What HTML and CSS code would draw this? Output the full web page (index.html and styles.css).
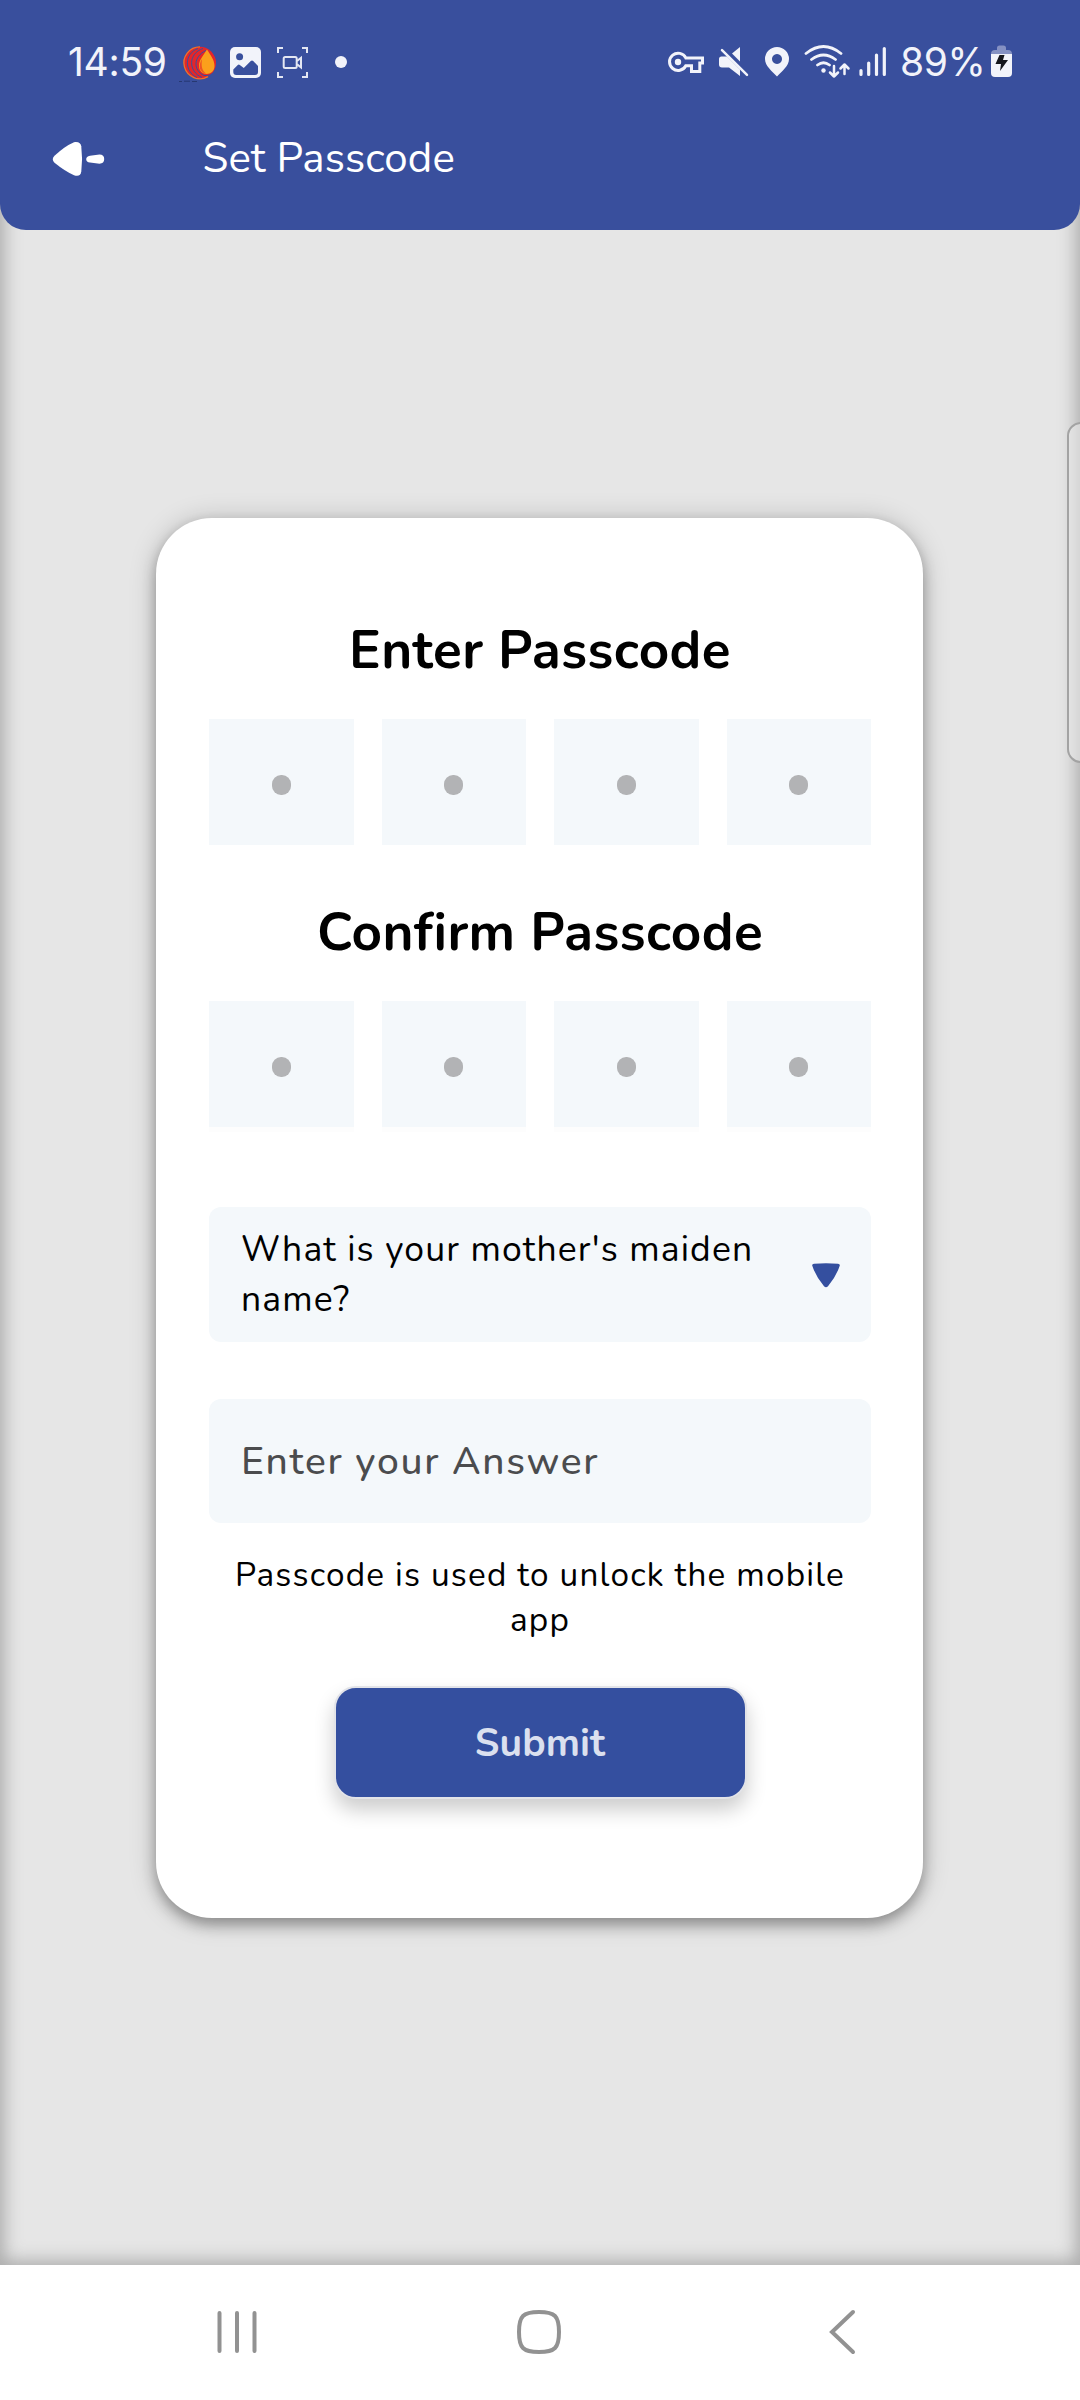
FILE: index.html
```html
<!DOCTYPE html>
<html lang="en">
<head>
<meta charset="utf-8">
<title>Set Passcode</title>
<link rel="stylesheet" href="styles.css">
</head>
<body>
<div class="screen">
  <header class="header">
    <div class="status">
      <div class="status-left">
        <span class="clock">14:59</span>
        <svg class="tray" viewBox="170 40 180 46" width="180" height="46">
          <path d="M179 81.500h3m2-.3h6m2 .3h5" stroke="#263871" stroke-width="1"/>
          <circle cx="200" cy="62.800" r="16" fill="#e3262a"/>
          <path d="M200 46.800a16 16 0 1 0 8 29.800" fill="none" stroke="#f0712a" stroke-width="1.300"/>
          <path d="M198 48.500c-14 5-14 23-1 29M203 48.500c-15 5-15 23-1 29M206 50.500c-13 6-13 20-2 25q7 1 12-5" fill="none" stroke="#394f9d" stroke-width="1"/>
          <path d="M208 45h10v17z" fill="#394f9d"/>
          <path d="M207 49.500C203 56 199 60 199 66c0 10.500 15.500 10.500 15.500 0 0-6-3.500-10-7.500-16.500z" fill="#fba01c"/>
          <path d="M202 59c-4 7-3 13 4 14.500-4-3-5-7-4-14.500z" fill="#ee5524"/>
          <rect x="230" y="47" width="31" height="31" rx="5" fill="#f2f3fa"/>
          <circle cx="239.600" cy="56.700" r="3.500" fill="#394f9d"/>
          <path d="M233.300 69.500l4.500-4.500q1-.8 2 0l4 3 7-7q1.200-1 2.400 0l4.800 5v6q0 3-3 3h-18.700q-3 0-3-3z" fill="#394f9d"/>
          <g fill="none" stroke="#e4e7f3" stroke-width="2">
            <path d="M278 53v-5h5M302 48h5v5M307 72v5h-5M283 77h-5v-5"/>
            <rect x="283.700" y="57" width="13" height="11" rx="1.500"/>
            <path d="M297 61l4-3.200v9.600l-4-3.200"/>
          </g>
          <circle cx="341" cy="62" r="6" fill="#f2f3fa"/>
        </svg>
      </div>
      <div class="status-right">
        <svg class="signals" viewBox="660 40 235 46" width="235" height="46" fill="none" stroke="#f2f3fa">
          <path d="M685.800 57.900H702.500v5.200h-2.700v8.400h-8.300v-5.800h-5.700A8.600 8.600 0 1 1 685.800 57.900z" stroke-width="3"/>
          <circle cx="678" cy="62" r="3.200" fill="#f2f3fa" stroke="none"/>
          <path d="M719 59q0-2.500 2.500-2.500h5.500L740 69.500V76l-11-8.500h-7q-3 0-3-3zM732 53.500l8-6.500v14.500z" fill="#f2f3fa" stroke="none"/>
          <path d="M722 50.200l25 24.600" stroke-width="2.500" stroke-linecap="round"/>
          <path fill-rule="evenodd" d="M777 47a12 12 0 0 1 12 12c0 7-7 12-12 17.500-5-5.500-12-10.500-12-17.500a12 12 0 0 1 12-12zm0 7a5 5 0 1 0 .01 0z" fill="#f2f3fa" stroke="none"/>
          <path d="M806 53.500q17.500-14 35 0M811.500 59.500q12-9 24 0M817.500 65q6-4.500 12 0" stroke-width="2.800" stroke-linecap="round"/>
          <circle cx="823.500" cy="70.500" r="2.200" fill="#f2f3fa" stroke="none"/>
          <path d="M834 66v10.500m-4-4 4 4 4-4M844.500 74V64.500m-4 4 4-4 4 4" stroke-width="2.500" stroke-linecap="round" stroke-linejoin="round"/>
          <path d="M861 70.500v4M868.700 63v11.500M876.500 55v19.500M884.300 48.500v26" stroke-width="3.200" stroke-linecap="round"/>
        </svg>
        <span class="level">89%</span>
        <svg class="battery" viewBox="990 44 24 34" width="24" height="34">
          <path d="M991 54q0-4 4-4h2v-2q0-2.500 2.500-2.500h4q2.500 0 2.500 2.500v2h2q4 0 4 4z" fill="#8591c3"/>
          <path d="M991 54h21v19q0 4-4 4h-13q-4 0-4-4z" fill="#f2f3fa"/>
          <path d="M999.500 55h5l-1.500 5h5l-8 11 1-7h-5.500z" fill="#14151b"/>
        </svg>
      </div>
    </div>
    <div class="appbar">
      <svg class="back" viewBox="50 140 56 38" width="56" height="38" fill="#fff">
        <path d="M74 142.200c4.500-.8 6.800 1 7.300 4q1.500 12.500 0 25c-.5 4-2.800 5.500-7.300 4q-9-4-19.500-12.500-3.500-3.500 0-7Q65 146 74 142.200z"/>
        <path d="M90 155.800l9.500-1.200q4.700 0 4.700 4.500t-4.700 4.600l-9.500-1.200q-3.800-.5-3.800-3.300t3.800-3.400z"/>
      </svg>
      <h1 class="title">Set Passcode</h1>
    </div>
  </header>
  <main class="content">
    <section class="card">
      <h2 class="heading heading-enter">Enter Passcode</h2>
      <div class="pins"><div class="pin"><i class="dot"></i></div><div class="pin"><i class="dot"></i></div><div class="pin"><i class="dot"></i></div><div class="pin"><i class="dot"></i></div></div>
      <h2 class="heading heading-confirm">Confirm Passcode</h2>
      <div class="pins pins-confirm"><div class="pin"><i class="dot"></i></div><div class="pin"><i class="dot"></i></div><div class="pin"><i class="dot"></i></div><div class="pin"><i class="dot"></i></div></div>
      <div class="select">
        <span class="question">What is your mother's maiden<br>name?</span>
        <svg class="caret" viewBox="0 0 28 25" width="28" height="25"><path d="M2 .8q12-1.200 24 0 2 .2 1.800 1.800Q24 14 16 23.200q-2 2.200-4 0Q4 14 .2 2.600 0 1 2 .8z" fill="#344f9f"/></svg>
      </div>
      <div class="answer">Enter your Answer</div>
      <p class="hint">Passcode is used to unlock the mobile<br>app</p>
      <button class="submit">Submit</button>
    </section>
    <div class="edge-handle"></div>
  </main>
  <nav class="navbar">
    <svg class="nav-icons" viewBox="0 0 1080 135" width="1080" height="135" fill="none" stroke="#929292" stroke-width="4" stroke-linecap="round">
      <path d="M219.500 48v38M237 48v38M254.500 48v38"/>
      <path d="M539 47c16 0 20 4 20 20s-4 20-20 20-20-4-20-20 4-20 20-20z"/>
      <path d="M853 47l-21 20 21 20"/>
    </svg>
  </nav>
</div>
</body>
</html>
```
FILE: styles.css
```css
* { box-sizing: border-box; }
body { margin: 0; font-family: Nunito, Lato, sans-serif; color: #000; }
h1, h2, p { margin: 0; }
svg { display: block; flex: none; }
.screen { width: 1080px; height: 2400px; display: flex; flex-direction: column; background: #bebebe; overflow: hidden; }
.header { height: 230px; flex: none; background: #394f9d; border-radius: 0 0 26px 26px; position: relative; z-index: 1; }
.status { height: 86px; padding: 40px 66px 0 68px; display: flex; justify-content: space-between; }
.status-left, .status-right { display: flex; }
.clock, .level { font: 400 39px/44px Inter, sans-serif; color: #f2f3fa; white-space: nowrap; }
.clock { width: 102px; letter-spacing: -.3px; }
.level { width: 90px; margin-left: 5px; letter-spacing: -.4px; }
.battery { margin-top: 4px; }
.appbar { display: flex; padding: 54px 0 0 50px; }
.title { margin: -7px 0 0 96.500px; font-size: 42px; line-height: 52px; letter-spacing: .1px; font-weight: 400; color: #fff; white-space: nowrap; }
.content { height: 2095px; flex: none; position: relative; margin-top: -60px; padding: 348px 157px 0 156px; background: #e6e6e6; box-shadow: inset 0 0 18px 4px #aaa; }
.card { height: 1399.500px; padding: 95px 52px 0 53px; display: flex; flex-direction: column; background: #fff; border-radius: 56px; box-shadow: 0 7px 14px rgba(0,0,0,.3), 0 2px 28px rgba(0,0,0,.2); }
.heading { height: 76px; text-align: center; font-size: 53px; line-height: 76px; letter-spacing: .4px; font-weight: 700; white-space: nowrap; }
.heading-enter { margin-bottom: 30px; }
.heading-confirm { margin: 50px 0 30px; }
.pins { height: 126px; display: grid; grid-template-columns: repeat(4, 1fr); gap: 28px; }
.pin { background: #f4f8fb; display: flex; justify-content: center; padding-top: 56px; }
.pins-confirm .pin { box-shadow: 0 5px 0 #fdfdfd; }
.dot { width: 19px; height: 20px; border-radius: 9px; background: #b2b3b5; }
.select { height: 134.500px; margin-top: 80px; padding: 18px 31px 0 32px; border-radius: 12px; background: #f4f8fb; display: flex; justify-content: space-between; }
.question { font-size: 35.500px; line-height: 50px; letter-spacing: 1.150px; white-space: nowrap; }
.caret { margin-top: 38px; }
.answer { height: 124px; margin-top: 57px; padding: 0 32px; border-radius: 12px; background: #f4f8fb; font-size: 39px; line-height: 125px; letter-spacing: 1.700px; font-weight: 500; color: #4b4c4e; white-space: nowrap; }
.hint { margin-top: 30px; text-align: center; font-size: 33.300px; line-height: 45px; letter-spacing: 1.200px; white-space: nowrap; }
.submit { align-self: center; width: 413px; height: 113px; margin-top: 43px; padding-top: 4px; border: 2px solid #e2e3e8; border-radius: 22px; background: #344f9f; color: #dbe0ef; font: 700 39px/48px Nunito, Lato, sans-serif; letter-spacing: .1px; box-shadow: 0 11px 20px rgba(0,0,0,.2); }
.edge-handle { position: absolute; top: 252px; right: -20px; width: 33px; height: 341px; border: 2px solid #a3a3a3; border-radius: 14px; background: rgba(235,235,235,.55); }
.navbar { height: 135px; flex: none; background: #fff; }
```
